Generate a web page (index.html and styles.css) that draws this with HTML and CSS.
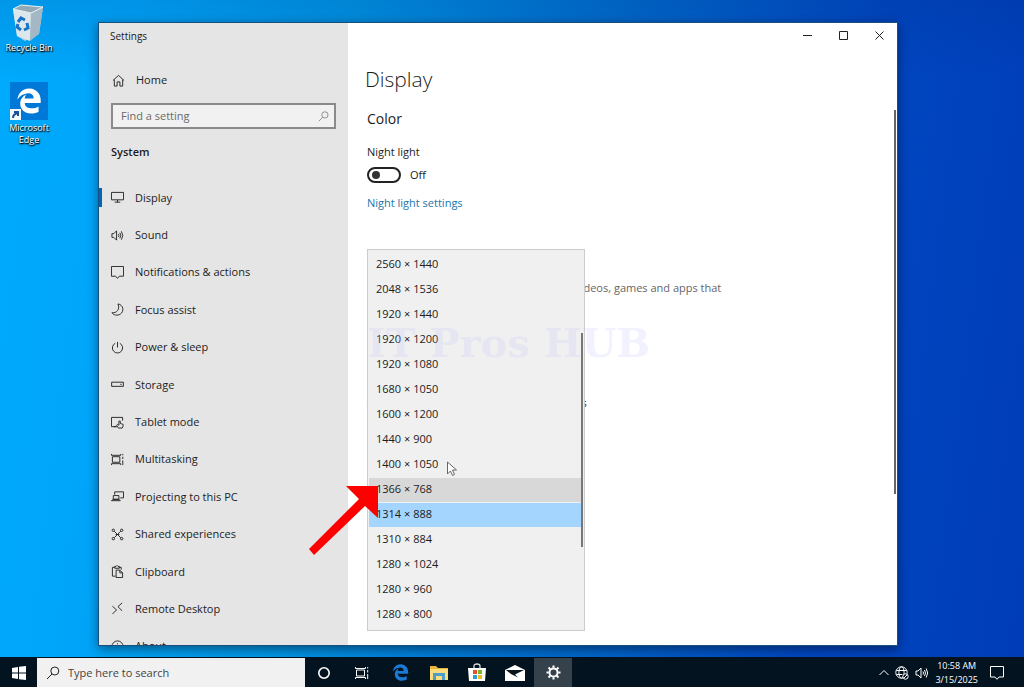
FILE: index.html
```html
<!DOCTYPE html>
<html lang="en">
<head>
  <meta charset="UTF-8">
  <meta name="viewport" content="width=device-width, initial-scale=1">
  <title>Settings</title>
  <link rel="stylesheet" href="styles.css">
</head>
<body>
  <svg class="defs" aria-hidden="true">
    <symbol id="edge" viewBox="0 0 512 512">
      <path fill="currentColor" d="M486.286 243.671c0-44.032-7.754-84.465-28.801-122.405C416.498 47.879 343.912 8.001 258.893 8.001 118.962 7.724 40.617 113.214 26.058 227.679c42.421-61.343 117.07-121.376 220.375-124.966 0 0 109.666 0 99.419 104.957H169.997c6.369-37.386 18.554-58.986 34.339-78.926-75.048 34.893-121.85 96.096-120.742 188.315.83 71.448 50.124 144.836 120.743 171.976 83.357 31.847 192.776 7.2 240.132-21.324V363.307c-80.864 56.494-270.871 60.925-272.255-67.572h314.073z"/>
    </symbol>
    <symbol id="sound" viewBox="0 0 14 14">
      <path d="M1 5h2l3-3v10L3 9H1zM8 5.500q1 1.500 0 3M9.500 4q2 3 0 6M11.200 2.500q3 4.500 0 9"/>
    </symbol>
    <symbol id="search" viewBox="0 0 14 14">
      <circle cx="8.800" cy="5" r="4"/><path d="M6 8L1 13"/>
    </symbol>
    <symbol id="note" viewBox="0 0 14 14">
      <path d="M.5 .5h13v10.500H9l-2 2.300-2-2.300H.5z"/>
    </symbol>
    <symbol id="tasks" viewBox="0 0 14 14">
      <path d="M1.500 4h8v6h-8zM.5 1v1.500h10V1M.5 13v-1.500h10V13M12.700 1v1.500M12.700 8v5M12.700 4v2.500"/>
    </symbol>
  </svg>

  <main class="desktop">
    <div class="shortcuts">
      <a href="#" class="shortcut">
        <svg width="36" height="38" viewBox="0 0 36 38">
          <path d="M2 5L10 1l22 2-4 27-14 7-8-5z" fill="#b9cfdb"/>
          <path d="M2 5l18 4-1 28-13-5z" fill="#dce7ec"/>
          <path d="M20 9l12-6-4 27-9 7z" fill="#a3b8c4"/>
          <path d="M2 5L10 1l22 2-12 6z" fill="#93a9b5" stroke="#e8f2f6"/>
          <g fill="none" stroke="#1773c6" stroke-width="3">
            <path d="M7 18l3-4 4 2M16 19l1 5-4 2M10 26l-4-3 1-3"/>
          </g>
        </svg>
        <span>Recycle Bin</span>
      </a>
      <a href="#" class="shortcut">
        <span class="tile">
          <svg width="26" height="26"><use href="#edge"/></svg>
          <svg class="link-badge" width="11" height="11" viewBox="0 0 11 11">
            <path fill="#f4f8fb" d="M0 0h11v11H0z"/>
            <path fill="none" stroke="#1a4f9c" stroke-width="2" d="M3 9q0-4 5-5M4 3h4v4"/>
          </svg>
        </span>
        <span>Microsoft<br>Edge</span>
      </a>
    </div>

    <section class="window">
      <aside class="sidebar">
        <div class="window-title">Settings</div>
        <a href="#" class="home">
          <svg class="icon" viewBox="0 0 14 14"><path d="M1 7l6-5.500L13 7M2.500 6v7H5.500V8.500h3V13h3V6"/></svg>
          Home
        </a>
        <div class="find">
          <input type="text" aria-label="Find a setting" placeholder="Find a setting">
          <svg width="11" height="11"><use href="#search"/></svg>
        </div>
        <h2>System</h2>
        <nav class="menu">
          <a href="#" class="active"><svg class="icon" viewBox="0 0 14 14"><path d="M.5 1.500h13v8H.5zM7 9.500V12M4 12h6"/></svg>Display</a>
          <a href="#"><svg class="icon"><use href="#sound"/></svg>Sound</a>
          <a href="#"><svg class="icon" viewBox="0 0 14 14"><use href="#note" width="14" height="14"/></svg>Notifications &amp; actions</a>
          <a href="#"><svg class="icon" viewBox="0 0 14 14"><path d="M7.500 1c6 1 7 8 2.500 11-3 2-7.500 1-9-1.500C6 11 10 7 7.500 1z"/></svg>Focus assist</a>
          <a href="#"><svg class="icon" viewBox="0 0 14 14"><path d="M7 1v6M4.500 2.500a5.500 5.500 0 1 0 5 0"/></svg>Power &amp; sleep</a>
          <a href="#"><svg class="icon" viewBox="0 0 14 14"><path d="M.7 4.500h12.600v4.500H.7zM10 6.800h1.500"/></svg>Storage</a>
          <a href="#"><svg class="icon" viewBox="0 0 14 14"><path d="M6 11.500H.5v-10h12V5M3 11.500h3M8 13l-2-3 1-1 1.500 1V5.500h1.500V8l3 1v2l-1 2z"/></svg>Tablet mode</a>
          <a href="#"><svg class="icon"><use href="#tasks"/></svg>Multitasking</a>
          <a href="#"><svg class="icon" viewBox="0 0 14 14"><path d="M4 5V2h9.500v6.500H10M2.500 6h6v4h-6zM.5 11.500h9.500L8.500 10h-6z"/></svg>Projecting to this PC</a>
          <a href="#"><svg class="icon" viewBox="0 0 14 14"><path d="M3.500 3.500l7 7M10.500 3.500l-7 7M5 7h4"/><circle cx="2.500" cy="2.500" r="1.300"/><circle cx="11.500" cy="2.500" r="1.300"/><circle cx="2.500" cy="11.500" r="1.300"/><circle cx="11.500" cy="11.500" r="1.300"/></svg>Shared experiences</a>
          <a href="#"><svg class="icon" viewBox="0 0 14 14"><path d="M5 12H1.500V2.500H4M9 2.500h2V5M4 3.500v-2h1.500l1-1 1 1H9v2zM5.500 5.500h4l3 3v5h-7zM9.500 5.500v3h3"/></svg>Clipboard</a>
          <a href="#"><svg class="icon" viewBox="0 0 14 14"><path d="M1.500 4.500L6 8.500l-4.500 4.500M12 1L7.500 5l4.500 4.500"/></svg>Remote Desktop</a>
          <a href="#"><svg class="icon" viewBox="0 0 14 14"><circle cx="7" cy="7" r="6"/><path d="M7 6v4M7 3.500v1.200"/></svg>About</a>
        </nav>
      </aside>

      <div class="page">
        <div class="controls">
          <button aria-label="Minimize"><svg viewBox="0 0 9 9"><path d="M0 4.500h9"/></svg></button>
          <button aria-label="Maximize"><svg viewBox="0 0 9 9"><path d="M.5.5h8v8h-8z"/></svg></button>
          <button aria-label="Close"><svg viewBox="0 0 9 9"><path d="M.5.5l8 8M8.500.5l-8 8"/></svg></button>
        </div>
        <h1>Display</h1>
        <h3>Color</h3>
        <label for="nightLight">Night light</label>
        <div class="toggle">
          <input type="checkbox" id="nightLight">
          <span>Off</span>
        </div>
        <a href="#" class="settings-link">Night light settings</a>
        <h3 class="hd">Windows HD Color</h3>
        <p class="hint">Get a brighter, more detailed picture for videos, games and apps that</p>
        <p class="scale">Alter the size of text, apps, and other items</p>
        <div class="page-scroll"></div>

        <div class="dropdown">
          <select size="15" aria-label="Display resolution">
            <option>2560 × 1440</option>
            <option>2048 × 1536</option>
            <option>1920 × 1440</option>
            <option>1920 × 1200</option>
            <option>1920 × 1080</option>
            <option>1680 × 1050</option>
            <option>1600 × 1200</option>
            <option>1440 × 900</option>
            <option>1400 × 1050</option>
            <option class="hovered">1366 × 768</option>
            <option selected>1314 × 888</option>
            <option>1310 × 884</option>
            <option>1280 × 1024</option>
            <option>1280 × 960</option>
            <option>1280 × 800</option>
          </select>
          <div class="list-scroll"></div>
        </div>
      </div>
    </section>

    <div class="watermark">IT Pros HUB</div>
    <svg class="arrow" width="70" height="70" viewBox="0 0 70 70">
      <path fill="#f00" d="M37 0h32v32l-13-12L5 69l-5-6 50-50z"/>
    </svg>
    <svg class="cursor" width="10" height="16" viewBox="0 0 10 16">
      <path fill="#fff" stroke="#666" d="M.5 1v12l3-3 2 4.500 2-1-2-4.500h4z"/>
    </svg>
  </main>

  <footer class="taskbar">
    <button class="start" aria-label="Start">
      <svg width="14" height="14" viewBox="0 0 14 14"><path fill="#fff" d="M0 2l6-1v5.500H0zM7 .8L14 0v6.500H7zM0 7.500h6V13l-6-1zM7 7.500h7V14l-7-.8z"/></svg>
    </button>
    <div class="search">
      <svg width="14" height="14"><use href="#search"/></svg>
      <input type="text" aria-label="Search" placeholder="Type here to search">
    </div>
    <div class="apps">
      <button aria-label="Cortana"><svg width="14" height="14" viewBox="0 0 14 14"><circle cx="7" cy="7" r="5.200" fill="none" stroke="#fff" stroke-width="1.600"/></svg></button>
      <button aria-label="Task view"><svg class="line" width="14" height="14"><use href="#tasks"/></svg></button>
      <button class="edge" aria-label="Edge"><svg width="17" height="17"><use href="#edge"/></svg></button>
      <button aria-label="File Explorer">
        <svg width="18" height="16" viewBox="0 0 18 16"><path fill="#e9b33c" d="M0 1h6l2 2h10v12H0z"/><path fill="#fbdc7c" d="M0 4h18v11H0z"/><path fill="#4a9cc9" d="M3 15V8h12v7h-3v-4H6v4z"/></svg>
      </button>
      <button aria-label="Store">
        <svg width="20" height="20" viewBox="0 0 20 20"><path fill="none" stroke="#ddd" stroke-width="1.300" d="M7 6V3q0-2 3-2t3 2v3"/><path fill="#fff" d="M1 5h18l-1 13H2z"/><path fill="#e8502a" d="M6 7h4v4H6z"/><path fill="#7cb82f" d="M11 7h4v4h-4z"/><path fill="#2a9ed8" d="M6 12h4v4H6z"/><path fill="#f5b81d" d="M11 12h4v4h-4z"/></svg>
      </button>
      <button aria-label="Mail">
        <svg width="20" height="16" viewBox="0 0 20 16"><path fill="#fff" d="M0 5l10-5 10 5v11H0z"/><path fill="#07131d" d="M1 5h18l-9 4.500 3 3L6 9z"/></svg>
      </button>
      <button class="running" aria-label="Settings">
        <svg width="15" height="15" viewBox="0 0 16 16"><circle cx="8" cy="8" r="4.300" fill="none" stroke="#fff" stroke-width="2"/><path fill="none" stroke="#fff" stroke-width="2.200" d="M8 .5V3M8 13v2.500M.5 8H3M13 8h2.500M2.700 2.700l1.800 1.800M11.500 11.500l1.800 1.800M13.300 2.700l-1.800 1.800M4.500 11.500l-1.800 1.800"/></svg>
      </button>
    </div>
    <div class="tray">
      <svg class="line" width="10" height="10" viewBox="0 0 10 10"><path d="M.5 7L5 2.500 9.500 7"/></svg>
      <svg class="line" width="14" height="14" viewBox="0 0 14 14"><circle cx="6.500" cy="6.500" r="5.700"/><ellipse cx="6.500" cy="6.500" rx="2.600" ry="5.700"/><path d="M1.300 4.500h10.400M1.300 8.500h6"/><circle cx="10.500" cy="10.500" r="2.700" fill="#07101f"/><path d="M8.800 12.200l3.500-3.500"/></svg>
      <svg class="line" width="14" height="14"><use href="#sound"/></svg>
      <div class="clock">10:58 AM<br>3/15/2025</div>
      <svg class="line" width="14" height="14"><use href="#note"/></svg>
    </div>
  </footer>
</body>
</html>
```
FILE: styles.css
```css
:root {
  --text: #1c1c1c;
  --accent: #0067b8;
  --side: #e5e5e5;
  --list: #f0f0f0;
  --bar: #03131f;
}

* {
  box-sizing: border-box;
}

body {
  margin: 0;
  height: 100vh;
  display: flex;
  flex-direction: column;
  overflow: hidden;
  font-family: 'Open Sans', 'Noto Sans', sans-serif;
  font-size: 11px;
  line-height: 16px;
  color: var(--text);
}

a {
  color: inherit;
  text-decoration: none;
}

button {
  padding: 0;
  border: none;
  background: none;
  display: flex;
  align-items: center;
  justify-content: center;
}

input, select {
  font: inherit;
  color: inherit;
}

h1, h2, h3, p {
  margin: 0;
}

.defs {
  position: absolute;
  width: 0;
  height: 0;
}

.desktop {
  position: relative;
  flex: 1;
  min-height: 0;
  background:
    linear-gradient(rgba(0, 40, 120, 0.15), transparent 12%),
    linear-gradient(97deg, #00aafc 0%, #00a6fa 12%, #0094e4 32%, #006acc 57%, #0046c0 80%, #003cb8 100%);
}

/* desktop shortcuts */
.shortcuts {
  width: 58px;
  padding-top: 4px;
  display: flex;
  flex-direction: column;
  gap: 28px;
}

.shortcut {
  display: flex;
  flex-direction: column;
  align-items: center;
  color: #fff;
  font-size: 9px;
  font-weight: 500;
  line-height: 12px;
  text-align: center;
  text-shadow: 0 1px 2px #000, 1px 1px 1px #000;
}

.tile {
  position: relative;
  width: 38px;
  height: 38px;
  margin-bottom: 2px;
  display: flex;
  align-items: center;
  justify-content: center;
  background: #0078d7;
}

.link-badge {
  position: absolute;
  left: 0;
  bottom: 0;
}

/* settings window */
.window {
  position: absolute;
  top: 22px;
  right: 126px;
  bottom: 11px;
  left: 98px;
  display: grid;
  grid-template-columns: 249px 1fr;
  overflow: hidden;
  background: #fff;
  border: 1px solid #17507f;
  box-shadow: 0 3px 10px rgba(0, 0, 0, 0.45);
}

.icon {
  width: 13px;
  height: 13px;
  flex: none;
}

.icon, .find svg, .search svg, .controls svg, .line {
  fill: none;
  stroke: #222;
}

.sidebar {
  display: flex;
  flex-direction: column;
  min-height: 0;
  background: var(--side);
}

.window-title {
  padding: 5px 11px;
  font-size: 10px;
}

.home {
  display: flex;
  align-items: center;
  gap: 11px;
  margin-top: 23px;
  padding-left: 13px;
}

.find {
  display: flex;
  align-items: center;
  height: 26px;
  margin: 15px 12px;
  padding: 0 5px 0 8px;
  background: #f1f1f1;
  border: 2px solid #8a8a8a;
}

.find input, .search input {
  flex: 1;
  min-width: 0;
  padding: 0;
  border: none;
  outline: none;
  background: none;
}

.find input::placeholder {
  color: #6a6a6a;
}

.find svg {
  stroke: #777;
}

.sidebar h2 {
  padding-left: 12px;
  font-size: 11px;
  font-weight: 600;
}

.menu {
  flex: 1;
  display: flex;
  flex-direction: column;
  margin: 19px 0 -20px;
}

.menu a {
  flex: 1;
  display: flex;
  align-items: center;
  gap: 11px;
  padding-left: 12px;
}

.menu .active {
  background: linear-gradient(var(--accent), var(--accent)) left / 3px 19px no-repeat;
}

/* right page */
.page {
  position: relative;
  padding-left: 19px;
  white-space: nowrap;
  overflow: hidden;
}

.controls {
  display: flex;
  justify-content: flex-end;
}

.controls button {
  width: 36px;
  height: 25px;
}

.controls svg {
  width: 9px;
  height: 9px;
}

.page h1 {
  margin: 17px 0 16px -2px;
  font-size: 21px;
  line-height: 28px;
  font-weight: 300;
}

.page h3 {
  font-size: 14px;
  line-height: 20px;
  font-weight: 400;
}

.page label {
  display: block;
  margin-top: 15px;
}

.toggle {
  display: flex;
  align-items: center;
  gap: 9px;
  margin-top: 7px;
}

.toggle input {
  appearance: none;
  width: 34px;
  height: 16px;
  margin: 0;
  padding: 2px 3px;
  border: 2px solid #222;
  border-radius: 8px;
}

.toggle input::before {
  content: '';
  display: block;
  width: 8px;
  height: 8px;
  border-radius: 50%;
  background: #333;
}

.settings-link {
  display: block;
  margin-top: 12px;
  color: #1a76ab;
}

.page .hd {
  padding-top: 34px;
}

.hint {
  margin-top: 15px;
  color: #666;
}

.scale {
  margin-top: 99px;
}

.page-scroll {
  position: absolute;
  top: 87px;
  right: 1px;
  width: 2px;
  height: 384px;
  background: #666;
}

/* open resolution list */
.dropdown {
  position: absolute;
  top: 226px;
  left: 19px;
  width: 218px;
}

.dropdown select {
  display: block;
  width: 100%;
  height: 382px;
  padding: 3px 1px 0;
  overflow: hidden;
  background: var(--list);
  border: 1px solid #ccc;
  border-radius: 0;
  outline: none;
}

.dropdown option {
  height: 25px;
  padding: 3px 7px 5px;
  line-height: 16px;
  color: var(--text);
  border-bottom: 1px solid var(--list);
}

.dropdown .hovered {
  background: #d8d8d8;
}

.dropdown option:checked {
  color: var(--text);
  background: linear-gradient(#a3d5ff, #a3d5ff);
}

.list-scroll {
  position: absolute;
  top: 84px;
  right: 2px;
  width: 2px;
  height: 214px;
  background: #777;
}

/* annotations over the desktop */
.watermark {
  position: absolute;
  top: 319px;
  left: 367px;
  font-family: 'DejaVu Serif', serif;
  font-size: 40px;
  line-height: 48px;
  font-weight: 700;
  color: rgba(190, 190, 255, 0.2);
  pointer-events: none;
}

.arrow {
  position: absolute;
  top: 486px;
  left: 309px;
}

.cursor {
  position: absolute;
  top: 461px;
  left: 447px;
}

/* taskbar */
.taskbar {
  display: flex;
  height: 30px;
  padding-top: 1px;
  background: var(--bar);
  color: #fff;
}

.start {
  width: 37px;
}

.search {
  display: flex;
  align-items: center;
  gap: 8px;
  width: 268px;
  padding-left: 9px;
  background: #f1f1f1;
}

.search input::placeholder {
  color: #444;
}

.apps {
  display: flex;
}

.apps button {
  width: 38px;
}

.apps .edge {
  width: 39px;
  color: #1a7ad4;
}

.apps .running {
  background: #35424c;
}

.line {
  stroke: #fff;
}

.tray {
  display: flex;
  align-items: center;
  gap: 6px;
  margin-left: auto;
  padding-right: 20px;
}

.clock {
  margin-right: 6px;
  font-size: 9px;
  line-height: 14px;
  text-align: center;
}
```
